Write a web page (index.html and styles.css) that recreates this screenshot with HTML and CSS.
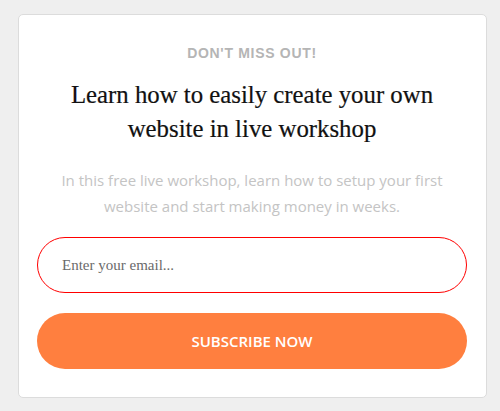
FILE: index.html
```html
<!DOCTYPE html>
<html>
<head>
<meta charset="utf-8">
<link rel="stylesheet" href="styles.css">
</head>
<body>
<div class="card">
  <div class="eyebrow">DON'T MISS OUT!</div>
  <h1 class="title">Learn how to easily create your own website in live workshop</h1>
  <p class="desc">In this free live workshop, learn how to setup your first website and start making money in weeks.</p>
  <form class="form">
    <input class="email" type="text" placeholder="Enter your email...">
    <button class="btn" type="button">SUBSCRIBE NOW</button>
  </form>
</div>
</body>
</html>
```
FILE: styles.css
```css
html, body {
  margin: 0;
  padding: 0;
  background: #efefef;
}
body {
  padding: 14px 13px 13px 18px;
}
.card {
  box-sizing: border-box;
  width: 469px;
  height: 384px;
  background: #fff;
  border: 1px solid #dcdcdc;
  border-radius: 5px;
  padding: 29px 19px 0 18px;
  text-align: center;
}
.eyebrow {
  font-family: "Liberation Sans", Arial, sans-serif;
  font-weight: bold;
  font-size: 14px;
  line-height: 18px;
  letter-spacing: 0.7px;
  color: #b5b5b5;
}
.title {
  margin: 16px 0 0;
  font-family: "Liberation Serif", "Times New Roman", serif;
  font-weight: normal;
  font-size: 24.8px;
  line-height: 34px;
  color: #111;
  padding: 0 30px;
  -webkit-text-stroke: 0.2px #111;
}
.desc {
  margin: 21px 0 0;
  font-family: "Open Sans", sans-serif;
  font-size: 15px;
  line-height: 26px;
  color: #c4c4c4;
}
.form {
  margin-top: 18px;
  display: flex;
  flex-direction: column;
  gap: 20px;
}
.email {
  box-sizing: border-box;
  height: 56px;
  width: 100%;
  border: 1.5px solid #f00;
  border-radius: 28px;
  padding: 0 24px;
  font-family: "Liberation Serif", "Times New Roman", serif;
  font-size: 15px;
  outline: none;
  background: #fff;
}
.email::placeholder {
  color: #6a6a6a;
}
.btn {
  height: 56px;
  width: 100%;
  border: none;
  border-radius: 28px;
  background: #ff7f3f;
  color: #fff;
  font-family: "Open Sans", sans-serif;
  font-weight: 600;
  font-size: 15px;
  cursor: pointer;
}
```
